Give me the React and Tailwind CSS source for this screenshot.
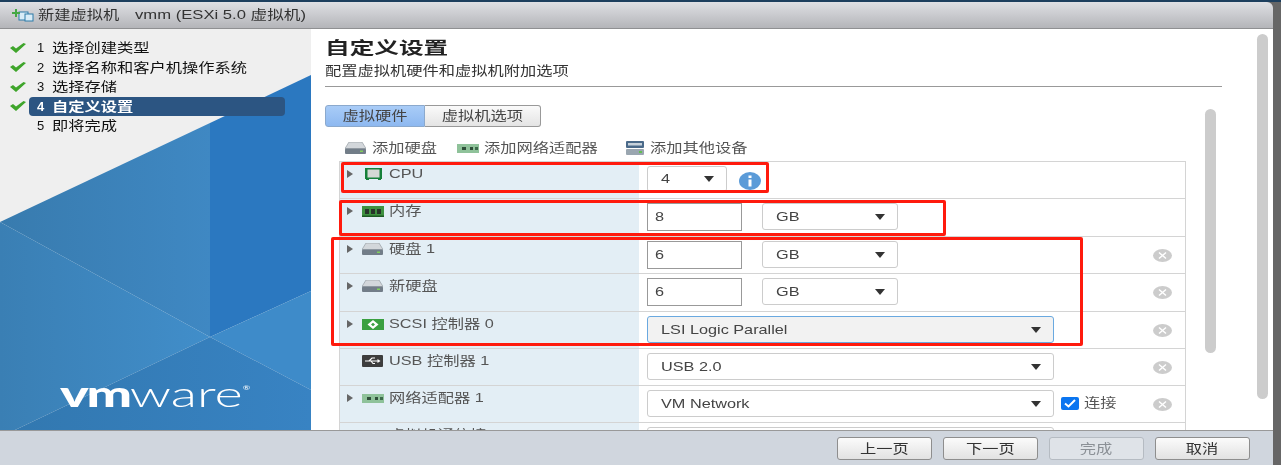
import React from 'react'

function T({ className = '', children }) {
  return <span className={`inline-block origin-left scale-x-[1.25] whitespace-nowrap blur-[0.4px] ${className}`}>{children}</span>
}

function Caret({ className = '' }) {
  return (
    <svg width="10" height="6" viewBox="0 0 10 6" className={`shrink-0 ${className}`}>
      <path d="M0 0h10L5 6z" fill="#333" />
    </svg>
  )
}

function Check() {
  return (
    <svg width="16" height="10" viewBox="0 0 16 10">
      <path d="M0 5l3-2 3 2.500L13.500 0 16 1 6 10z" fill="#3fa52b" />
    </svg>
  )
}

function HddIcon() {
  return (
    <svg width="21" height="12" viewBox="0 0 21 12">
      <path d="M4 0h13l4 6.500H0z" fill="#d3d7db" stroke="#8a9299" strokeWidth=".6" />
      <rect y="6.500" width="21" height="5.500" rx="1" fill="#727d88" />
      <rect x="15" y="8.500" width="3" height="1.500" fill="#7fd05a" />
    </svg>
  )
}

function RamIcon() {
  return (
    <svg width="22" height="11" viewBox="0 0 22 11">
      <rect width="22" height="10" fill="#3f9140" />
      <rect x="3" y="3" width="4" height="5" fill="#27352a" />
      <rect x="9" y="3" width="4" height="5" fill="#27352a" />
      <rect x="15" y="3" width="4" height="5" fill="#27352a" />
      <rect y="9.500" width="22" height="1.500" fill="#1c5a22" />
    </svg>
  )
}

function NicIcon() {
  return (
    <svg width="22" height="9" viewBox="0 0 22 9">
      <rect width="22" height="9" fill="#8fc29a" />
      <rect x="5" y="3" width="4" height="3" fill="#2f4f3a" />
      <rect x="13" y="3" width="3" height="3" fill="#2f4f3a" />
      <rect x="18" y="3" width="3" height="3" fill="#3d6b4b" />
    </svg>
  )
}

function CpuIcon() {
  return (
    <svg width="17" height="12" viewBox="0 0 17 12" className="ml-[3px]">
      <rect width="17" height="11" fill="#16803a" />
      <rect x="2.500" y="1.500" width="12" height="8" fill="#d4d8d4" />
      <path d="M1 11h3v1H1zM13 11h3v1h-3z" fill="#16803a" />
    </svg>
  )
}

function ScsiIcon() {
  return (
    <svg width="22" height="11" viewBox="0 0 22 11">
      <rect width="22" height="11" fill="#3aa040" />
      <path d="M11 1L5.500 5.500 11 10l5.500-4.500zM11 3.800l2 1.700-2 1.700-2-1.700z" fill="#fff" />
    </svg>
  )
}

function UsbIcon() {
  return (
    <svg width="21" height="12" viewBox="0 0 21 12">
      <rect width="21" height="12" rx="1" fill="#3d3d3d" />
      <path d="M3 6h14M7 6l3-3h3M9 6l2 2.500h2" stroke="#fff" strokeWidth="1.200" fill="none" />
      <path d="M15.500 4l3 2-3 2z" fill="#fff" />
    </svg>
  )
}

function StorageIcon() {
  return (
    <svg width="18" height="14" viewBox="0 0 18 14">
      <rect width="18" height="7" rx="1" fill="#4a6a8a" />
      <rect x="2" y="2" width="14" height="2.500" fill="#c7d2dc" />
      <rect y="8" width="18" height="6" rx="1" fill="#9aa6b0" />
      <rect x="13" y="10" width="3" height="2" fill="#62c050" />
    </svg>
  )
}

function RemoveIcon() {
  return (
    <svg width="19" height="13" viewBox="0 0 19 13" className="shrink-0">
      <ellipse cx="9.500" cy="6.500" rx="9.500" ry="6.500" fill="#ccc" />
      <path d="M6 3.500l7 6M13 3.500l-7 6" stroke="#fff" strokeWidth="1.500" />
    </svg>
  )
}

function Select({ label, className = '', height = 'h-[27px]' }) {
  return (
    <div className={`flex items-center justify-between rounded-[3px] border border-[#ccc] bg-white pl-[13px] pr-[12px] text-[13px] text-[#444] ${height} ${className}`}>
      <T>{label}</T>
      <Caret />
    </div>
  )
}

function NumberBox({ value }) {
  return (
    <div className="flex h-[28px] w-[95px] shrink-0 items-center border border-[#999] bg-white pl-[7px] text-[13px] text-[#444]">
      <T>{value}</T>
    </div>
  )
}

function Row({ icon, label, arrow = true, height, children, remove = true }) {
  return (
    <div className={`flex shrink-0 border-b border-[#d4d4d4] ${height}`}>
      <div className="flex w-[299px] shrink-0 items-start bg-[#e3eef5] pl-[7px] pt-[5px]">
        <div className="mt-[3px] w-[15px] shrink-0">
          {arrow && (
            <svg width="6" height="8" viewBox="0 0 6 8">
              <path d="M0 0l6 4-6 4z" fill="#666" />
            </svg>
          )}
        </div>
        <div className="flex h-[14px] w-[27px] shrink-0 items-center">{icon}</div>
        <T className="text-[13px] leading-[14px] text-[#555]">{label}</T>
      </div>
      <div className="flex min-w-0 flex-1 items-start pl-[8px] pt-[4px]">
        {children}
        {remove && <div className="ml-auto mr-[13px] mt-[8px]"><RemoveIcon /></div>}
      </div>
    </div>
  )
}

function FooterButton({ label, disabled }) {
  return (
    <button
      className={`flex h-[23px] w-[95px] items-center justify-center rounded-[3px] border text-[13px] ${
        disabled
          ? 'border-[#b5bbc2] bg-[#dfe3e8] text-[#8b9096]'
          : 'border-[#8e8e8e] bg-gradient-to-b from-[#fbfbfb] to-[#e2e2e2] text-[#333]'
      }`}
    >
      <span className="inline-block scale-x-[1.25] whitespace-nowrap blur-[0.4px]">{label}</span>
    </button>
  )
}

const steps = [
  { n: '1', label: '选择创建类型', done: true },
  { n: '2', label: '选择名称和客户机操作系统', done: true },
  { n: '3', label: '选择存储', done: true },
  { n: '4', label: '自定义设置', done: true, active: true },
  { n: '5', label: '即将完成' },
]

function Sidebar() {
  return (
    <aside className="relative w-[311px] shrink-0 overflow-hidden bg-[#efefef] pt-[9px]">
      <svg width="311" height="401" viewBox="0 29 311 401" className="absolute left-0 top-0">
        <defs>
          <linearGradient id="upper" gradientUnits="userSpaceOnUse" x1="0" x2="210" y1="0" y2="0">
            <stop offset="0" stopColor="#387bae" />
            <stop offset="1" stopColor="#3f88c3" />
          </linearGradient>
          <linearGradient id="lower" gradientUnits="userSpaceOnUse" x1="0" x2="210" y1="0" y2="0">
            <stop offset="0" stopColor="#3a7fb4" />
            <stop offset="1" stopColor="#418eca" />
          </linearGradient>
          <linearGradient id="bottom" gradientUnits="userSpaceOnUse" x1="15" x2="311" y1="0" y2="0">
            <stop offset="0" stopColor="#3278b0" />
            <stop offset="1" stopColor="#3883c3" />
          </linearGradient>
        </defs>
        <polygon points="311,75 210,123 210,337 311,291" fill="#2b78c0" />
        <polygon points="210,123 0,222 210,337" fill="url(#upper)" />
        <polygon points="0,222 210,337 15,430 0,430" fill="url(#lower)" />
        <polygon points="210,337 311,291 311,390" fill="#3e8bc9" />
        <polygon points="210,337 311,390 311,430 15,430" fill="url(#bottom)" />
      </svg>
      <div className="relative flex flex-col">
        {steps.map((s) => (
          <div key={s.n} className="flex h-[19.500px] items-center pl-[10px]">
            <div className="w-[19px] shrink-0">{s.done && <Check />}</div>
            <div className={`flex h-[19px] w-[256px] items-center rounded-[4px] pl-[8px] text-[13px] ${s.active ? 'bg-[#2c5582] font-bold text-white' : 'text-[#111]'}`}>
              <span className="w-[15px] shrink-0 blur-[0.4px]">{s.n}</span>
              <T>{s.label}</T>
            </div>
          </div>
        ))}
      </div>
      <div className="absolute left-[60px] top-[346px] flex origin-left scale-x-[1.5] items-start font-['Lato',sans-serif] text-[36px] leading-[36px] text-white">
        <span className="font-black tracking-[-1.500px]">vm</span>
        <span className="font-light">ware</span>
        <span className="mt-[9px] text-[6px] leading-[8px]">®</span>
      </div>
    </aside>
  )
}

export default function App() {
  return (
    <div className="relative h-[465px] w-[1281px] overflow-hidden bg-[#666] font-['Liberation_Sans','Noto_Sans_CJK_SC',sans-serif]">
      <div className="h-[2px] bg-[#1d3f5e]" />
      <div className="flex h-[463px] w-[1273px] flex-col">
        <header className="flex h-[27px] shrink-0 items-center rounded-tr-[6px] border-b border-[#8f9092] bg-gradient-to-b from-[#dfe0e4] to-[#b4b5b9] pl-[12px]">
          <svg width="22" height="13" viewBox="0 0 22 13" className="mr-[4px] shrink-0">
            <rect x="7" y="3" width="9" height="8" fill="#d8ecf7" stroke="#2d7ba8" />
            <rect x="13" y="5" width="8" height="7" fill="#d8ecf7" stroke="#2d7ba8" />
            <path d="M3 0h2v3h3v2H5v3H3V5H0V3h3z" fill="#45a845" />
          </svg>
          <T className="w-[97px] text-[13px] text-[#333]">新建虚拟机</T>
          <span className="inline-block origin-left scale-x-[1.28] whitespace-nowrap text-[13px] text-[#333] blur-[0.4px]">vmm (ESXi 5.0 虚拟机)</span>
        </header>

        <div className="flex min-h-0 flex-1 bg-white">
          <Sidebar />
          <main className="flex min-w-0 flex-1 overflow-hidden pl-[14px]">
            <div className="w-[897px] shrink-0">
              <div className="mt-[10px] h-[20px] text-[17px] font-bold leading-[20px] text-[#222]">
                <span className="inline-block origin-left scale-x-[1.45] whitespace-nowrap blur-[0.4px]">自定义设置</span>
              </div>
              <div className="mt-[5px] h-[14px] text-[13px] leading-[14px] text-[#333]">
                <T>配置虚拟机硬件和虚拟机附加选项</T>
              </div>
              <div className="mt-[8px] border-b border-[#999]" />

              <div className="mt-[18px] flex">
                <div className="w-[861px] shrink-0">
                  <div className="flex h-[22px] w-[216px] text-[13px] text-[#444]">
                    <div className="flex w-[100px] items-center justify-center rounded-l-[3px] border border-[#8ba9cd] bg-gradient-to-b from-[#a9ccf7] to-[#8db8f0]">
                      <span className="scale-x-[1.25] blur-[0.4px]">虚拟硬件</span>
                    </div>
                    <div className="flex flex-1 items-center justify-center rounded-r-[3px] border border-l-0 border-[#999] bg-gradient-to-b from-[#fafafa] to-[#e4e4e4]">
                      <span className="scale-x-[1.25] whitespace-nowrap blur-[0.4px]">虚拟机选项</span>
                    </div>
                  </div>

                  <div className="mt-[13px] flex h-[16px] items-center pl-[20px] text-[13px] text-[#555]">
                    <HddIcon />
                    <T className="ml-[6px] w-[85px]">添加硬盘</T>
                    <NicIcon />
                    <T className="ml-[5px] w-[142px]">添加网络适配器</T>
                    <StorageIcon />
                    <T className="ml-[6px]">添加其他设备</T>
                  </div>

                  <div className="ml-[14px] mt-[5px] flex w-[847px] flex-col border-x border-t border-[#d4d4d4]">
                    <Row height="h-[37px]" icon={<CpuIcon />} label="CPU" remove={false}>
                      <Select label="4" height="h-[26px]" className="w-[80px] shrink-0" />
                      <svg width="22" height="18" viewBox="0 0 22 18" className="ml-[12px] mt-[6px]">
                        <ellipse cx="11" cy="9" rx="11" ry="9" fill="#5b9bd8" />
                        <rect x="9.500" y="7.500" width="3" height="7" fill="#fff" />
                        <rect x="9.500" y="3.500" width="3" height="2.500" fill="#fff" />
                      </svg>
                    </Row>
                    <Row height="h-[38px]" icon={<RamIcon />} label="内存" remove={false}>
                      <NumberBox value="8" />
                      <Select label="GB" className="ml-[20px] w-[136px] shrink-0" />
                    </Row>
                    <Row height="h-[37px]" icon={<HddIcon />} label="硬盘 1">
                      <NumberBox value="6" />
                      <Select label="GB" className="ml-[20px] w-[136px] shrink-0" />
                    </Row>
                    <Row height="h-[38px]" icon={<HddIcon />} label="新硬盘">
                      <NumberBox value="6" />
                      <Select label="GB" className="ml-[20px] w-[136px] shrink-0" />
                    </Row>
                    <Row height="h-[37px]" icon={<ScsiIcon />} label="SCSI 控制器 0">
                      <Select label="LSI Logic Parallel" className="w-[407px] shrink-0 !border-[#6aa9e0] !bg-[#f2f2f2]" />
                    </Row>
                    <Row height="h-[37px]" arrow={false} icon={<UsbIcon />} label="USB 控制器 1">
                      <Select label="USB 2.0" className="w-[407px] shrink-0" />
                    </Row>
                    <Row height="h-[37px]" icon={<NicIcon />} label="网络适配器 1">
                      <Select label="VM Network" className="w-[407px] shrink-0" />
                      <div className="ml-[7px] mt-[7px] flex h-[13px] w-[18px] shrink-0 items-center justify-center rounded-[2px] bg-[#0a75f0]">
                        <svg width="12" height="9" viewBox="0 0 12 9">
                          <path d="M1 4.500l3.500 3L11 1" stroke="#fff" strokeWidth="2" fill="none" />
                        </svg>
                      </div>
                      <T className="ml-[5px] mt-[6px] text-[13px] leading-[14px] text-[#555]">连接</T>
                    </Row>
                    <Row height="h-[37px]" icon={<NicIcon />} label="虚拟机通信接口">
                      <Select label="" className="w-[407px] shrink-0" />
                    </Row>
                  </div>
                </div>
                <div className="ml-[19px] mt-[4px] h-[244px] w-[11px] rounded-full bg-[#ccc]" />
              </div>
            </div>
            <div className="ml-[35px] mt-[5px] h-[365px] w-[11px] shrink-0 rounded-full bg-[#ccc]" />
          </main>
        </div>

        <footer className="flex h-[35px] shrink-0 items-start justify-end gap-[11px] border-t border-[#999] bg-[#d0d6de] pr-[23px] pt-[6px]">
          <FooterButton label="上一页" />
          <FooterButton label="下一页" />
          <FooterButton label="完成" disabled />
          <FooterButton label="取消" />
        </footer>
      </div>

      {/* red annotation boxes drawn over the screenshot */}
      <div className="absolute left-[341px] top-[162px] h-[31px] w-[428px] rounded-[2px] border-[3px] border-[#ff1a0d]" />
      <div className="absolute left-[339px] top-[200px] h-[36px] w-[607px] rounded-[2px] border-[3px] border-[#ff1a0d]" />
      <div className="absolute left-[331px] top-[237px] h-[109px] w-[752px] rounded-[2px] border-[3px] border-[#ff1a0d]" />
    </div>
  )
}
